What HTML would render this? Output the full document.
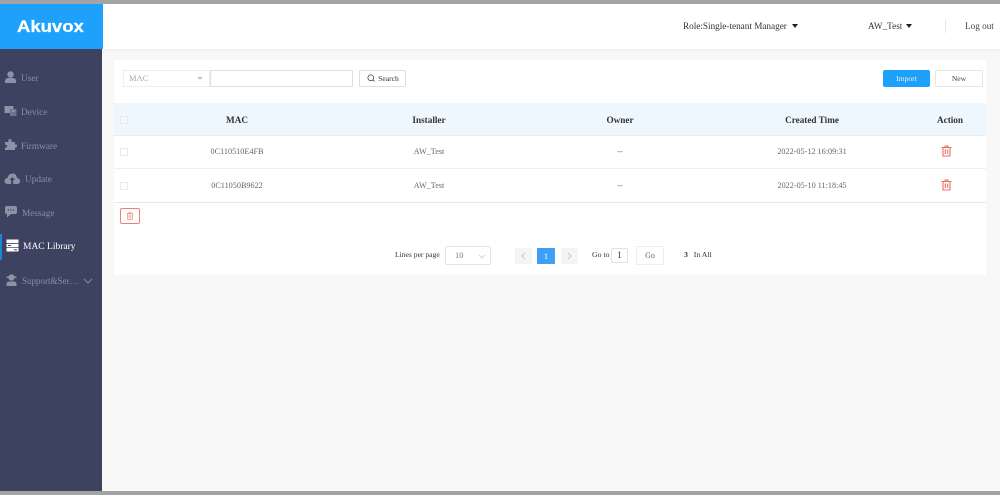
<!DOCTYPE html>
<html><head><meta charset="utf-8">
<style>
*{box-sizing:border-box}
html{margin:0;padding:0;width:1000px;height:495px;overflow:hidden}
body{margin:0;padding:0;width:1000px;height:495px;overflow:hidden;background:#f8f8f8;font-family:"Liberation Serif",serif;position:relative;color:#333}
#clip{position:absolute;left:0;top:0;width:1000px;height:495px;overflow:hidden}
#w{position:absolute;left:-8px;top:-8px;width:1016px;height:511px;background:#f8f8f8;filter:blur(.35px)}
#i{position:absolute;left:8px;top:8px;width:1000px;height:495px}
.a{position:absolute;white-space:nowrap}
.c{position:absolute;white-space:nowrap;transform:translateX(-50%)}
.nav{position:absolute;left:21px;font-size:9.3px;color:#8a8fa5;white-space:nowrap}
.ic{position:absolute}
.cb{position:absolute;left:120px;width:8px;height:8px;border:1px solid #e8eaed;background:#fff}
.td{font-size:8.2px;color:#666}
.th{font-size:9.2px;font-weight:bold;color:#333}
.line{position:absolute;left:114px;width:872px;height:1px;background:#eef0f3}
.btn{position:absolute;border-radius:2px;font-size:7.6px;text-align:center}
</style></head><body><div id="clip"><div id="w"><div id="i">
<div class="a" style="left:-8px;top:-8px;width:1016px;height:12px;background:#a3a3a3"></div>
<div class="a" style="left:-8px;top:491px;width:1016px;height:12px;background:#a3a3a3"></div>
<div class="a" style="left:103px;top:4px;width:905px;height:45px;background:#fff;box-shadow:0 1px 3px rgba(0,0,0,.05)"></div>
<div class="a" style="left:-8px;top:4px;width:111px;height:45px;background:#1ea1fb"></div>
<div class="a" style="left:17px;top:17.500px;font:bold 16.5px 'Liberation Sans',sans-serif;color:#fff;-webkit-text-stroke:.3px #fff;transform:scaleX(1.12);transform-origin:0 0">Akuvox</div>
<div class="a" style="left:-8px;top:49px;width:110px;height:442px;background:#3c4260"></div>

<div class="a" style="left:683px;top:21px;font-size:9.2px">Role:Single-tenant Manager</div>
<div class="a" style="left:792px;top:24px;border:3px solid transparent;border-top:4px solid #222;border-bottom:0"></div>
<div class="a" style="left:868px;top:21px;font-size:9.2px">AW_Test</div>
<div class="a" style="left:906px;top:24px;border:3px solid transparent;border-top:4px solid #222;border-bottom:0"></div>
<div class="a" style="left:945px;top:20px;width:1px;height:13px;background:#e6e6e6"></div>
<div class="a" style="left:965px;top:21px;font-size:9.2px;color:#444">Log out</div>

<svg class="ic" style="left:4px;top:71px" width="13" height="13" viewBox="0 0 13 13" fill="#8d92a6"><circle cx="6.500" cy="3.500" r="3.200"/><path d="M1 12V10Q1 7.500 4 7H9Q12 7.500 12 10V12Z"/></svg>
<div class="nav" style="top:74px">User</div>
<svg class="ic" style="left:4px;top:105px" width="13" height="12" viewBox="0 0 13 12" fill="#8d92a6"><rect x="0.500" y="1" width="9" height="7"/><rect x="6" y="4" width="6.500" height="7" fill="#6f7490"/><rect x="7.500" y="5.500" width="3.500" height="1" fill="#a5a9ba"/></svg>
<div class="nav" style="top:108px">Device</div>
<svg class="ic" style="left:4px;top:138px" width="13" height="13" viewBox="0 0 13 13" fill="#8d92a6"><path d="M1 4H4.500Q3.800 1 6 1Q8.200 1 7.500 4H11V6.500Q13 6 13 8Q13 10 11 9.500V12H1V9.500Q3 10 3 8Q3 6.500 1 6.800Z"/></svg>
<div class="nav" style="top:142px">Firmware</div>
<svg class="ic" style="left:4px;top:172px" width="17" height="14" viewBox="0 0 17 14" fill="#8d92a6"><path d="M4 12Q0 12 0.500 8.500Q1 6 3.500 6Q4.500 1.500 8.500 1.500Q12.500 1.500 13 6Q16 6.500 16 9Q16 12 13 12Z"/><path d="M8.200 5L5.500 8H7.200V12H9.200V8H11Z" fill="#3c4260"/></svg>
<div class="nav" style="left:25px;top:175px">Update</div>
<svg class="ic" style="left:4px;top:205px" width="14" height="14" viewBox="0 0 14 14" fill="#8d92a6"><path d="M3 1H11Q13 1 13 3V7Q13 9 11 9H7L3 12.500V9Q1 9 1 7V3Q1 1 3 1Z"/><circle cx="4.500" cy="5" r=".7" fill="#3c4260"/><circle cx="7" cy="5" r=".7" fill="#3c4260"/><circle cx="9.500" cy="5" r=".7" fill="#3c4260"/></svg>
<div class="nav" style="left:22px;top:209px">Message</div>
<div class="a" style="left:0;top:234px;width:2px;height:26px;background:#1c86d8"></div>
<svg class="ic" style="left:6px;top:239px" width="13" height="13" viewBox="0 0 13 13" fill="#fff"><rect x="0.500" y="0.500" width="12" height="3.500"/><rect x="0.500" y="4.800" width="12" height="3.500"/><rect x="0.500" y="9" width="12" height="3.500"/><rect x="8" y="10.300" width="3" height="1" fill="#3c4260"/><rect x="2" y="6" width="3" height="1" fill="#3c4260"/></svg>
<div class="nav" style="left:23px;top:242px;color:#fff;font-size:9.5px">MAC Library</div>
<svg class="ic" style="left:5px;top:273px" width="13" height="14" viewBox="0 0 13 14" fill="#8d92a6"><circle cx="6.500" cy="4.500" r="3.200"/><rect x="1.500" y="3.500" width="10" height="1.500"/><path d="M1.500 13V10.500Q2 8.500 4.500 8.500H8.500Q11 8.500 11.500 10.500V13Z"/></svg>
<div class="nav" style="left:22px;top:276px;font-size:9px">Support&amp;Ser…</div>
<svg class="ic" style="left:83px;top:278px" width="10" height="6" viewBox="0 0 10 6" fill="none" stroke="#8d92a6" stroke-width=".9"><path d="M1 1L5 5L9 1"/></svg>

<div class="a" style="left:114px;top:60px;width:872px;height:215px;background:#fff"></div>
<div class="a" style="left:123px;top:70px;width:87px;height:17px;border:1px solid #eeeeee;background:#fff"></div>
<div class="a" style="left:129px;top:73px;font-size:8.5px;color:#a5a5a5">MAC</div>
<div class="a" style="left:197px;top:77px;border:3px solid transparent;border-top:3px solid #c5c5c5;border-bottom:0"></div>
<div class="a" style="left:210px;top:70px;width:143px;height:17px;border:1px solid #dcdfe4;background:#fff"></div>
<div class="btn" style="left:359px;top:70px;width:47px;height:17px;border:1px solid #dcdfe4;line-height:15px;color:#333;padding-left:12px">Search</div>
<svg class="ic" style="left:367px;top:74px" width="8" height="8" viewBox="0 0 8 8" fill="none" stroke="#444" stroke-width=".8"><circle cx="3.800" cy="3.800" r="2.900"/><path d="M6 6L7.500 7.500"/></svg>
<div class="btn" style="left:883px;top:70px;width:47px;height:17px;background:#1ea1fb;color:#e8f5ff;line-height:17px">Import</div>
<div class="btn" style="left:935px;top:70px;width:48px;height:17px;border:1px solid #e3e5e8;color:#444;line-height:15px">New</div>

<div class="a" style="left:114px;top:103px;width:872px;height:32px;background:#eef7fd"></div>
<div class="line" style="top:135px;background:#e6ecf0"></div>
<div class="line" style="top:168px"></div>
<div class="line" style="top:202px;background:#e6e8eb"></div>
<div class="cb" style="top:116px;background:#f3f8fc"></div>
<div class="cb" style="top:148px"></div>
<div class="cb" style="top:182px"></div>

<div class="c th" style="left:237px;top:114.500px">MAC</div>
<div class="c th" style="left:429px;top:114.500px">Installer</div>
<div class="c th" style="left:620px;top:114.500px">Owner</div>
<div class="c th" style="left:812px;top:114.500px">Created Time</div>
<div class="c th" style="left:950px;top:114.500px">Action</div>

<div class="c td" style="left:237px;top:147px">0C110510E4FB</div>
<div class="c td" style="left:429px;top:147px">AW_Test</div>
<div class="c td" style="left:620px;top:147px">--</div>
<div class="c td" style="left:812px;top:147px">2022-05-12 16:09:31</div>
<div class="c td" style="left:237px;top:181px">0C11050B9622</div>
<div class="c td" style="left:429px;top:181px">AW_Test</div>
<div class="c td" style="left:620px;top:181px">--</div>
<div class="c td" style="left:812px;top:181px">2022-05-10 11:18:45</div>

<svg class="ic" style="left:941px;top:144.500px" width="11" height="12" viewBox="0 0 11 12" fill="none" stroke="#e8705f" stroke-width="1.100"><path d="M0.500 2.500H10.500M4 2.500V1H7V2.500M2 2.500V11H9V2.500M4.300 4.500V9M6.700 4.500V9"/></svg>
<svg class="ic" style="left:941px;top:178.500px" width="11" height="12" viewBox="0 0 11 12" fill="none" stroke="#e8705f" stroke-width="1.100"><path d="M0.500 2.500H10.500M4 2.500V1H7V2.500M2 2.500V11H9V2.500M4.300 4.500V9M6.700 4.500V9"/></svg>
<div class="a" style="left:120px;top:208px;width:20px;height:16px;border:1px solid #ea8078;border-radius:2px"></div>
<svg class="ic" style="left:126px;top:212px" width="8" height="8" viewBox="0 0 11 12" fill="none" stroke="#eb9188" stroke-width="1.200"><path d="M0.500 2.500H10.500M4 2.500V1H7V2.500M2 2.500V11H9V2.500M4.300 4.500V9M6.700 4.500V9"/></svg>

<div class="a" style="left:395px;top:250px;font-size:7.600px">Lines per page</div>
<div class="a" style="left:445px;top:246px;width:46px;height:19px;border:1px solid #e3e5e8;border-radius:2px"></div>
<div class="a" style="left:455px;top:250px;font-size:8.500px;color:#777">10</div>
<svg class="ic" style="left:478px;top:254px" width="8" height="5" viewBox="0 0 8 5" fill="none" stroke="#c5c8cc" stroke-width=".8"><path d="M1 1L4 4L7 1"/></svg>
<div class="a" style="left:515px;top:248px;width:17px;height:16px;background:#f3f4f5;border-radius:2px"></div>
<svg class="ic" style="left:521px;top:252px" width="5" height="8" viewBox="0 0 5 8" fill="none" stroke="#c5c8cc" stroke-width=".9"><path d="M4 1L1 4L4 7"/></svg>
<div class="a" style="left:537px;top:248px;width:18px;height:16px;background:#3d9ff5;color:#fff;font-size:8.500px;line-height:16px;text-align:center;border-radius:1px">1</div>
<div class="a" style="left:561px;top:248px;width:17px;height:16px;background:#f3f4f5;border-radius:2px"></div>
<svg class="ic" style="left:567px;top:252px" width="5" height="8" viewBox="0 0 5 8" fill="none" stroke="#c5c8cc" stroke-width=".9"><path d="M1 1L4 4L1 7"/></svg>
<div class="a" style="left:592px;top:250px;font-size:7.800px">Go to</div>
<div class="a" style="left:611px;top:248px;width:17px;height:15px;border:1px solid #e0e2e6;border-radius:2px;font-size:9px;line-height:13px;text-align:center">1</div>
<div class="a" style="left:636px;top:246px;width:28px;height:19px;border:1px solid #eceef0;font-size:8px;line-height:17px;text-align:center;color:#666">Go</div>
<div class="a" style="left:684px;top:250px;font-size:7.800px"><b>3</b>&nbsp;&nbsp; In All</div>
</div></div></div></body></html>
